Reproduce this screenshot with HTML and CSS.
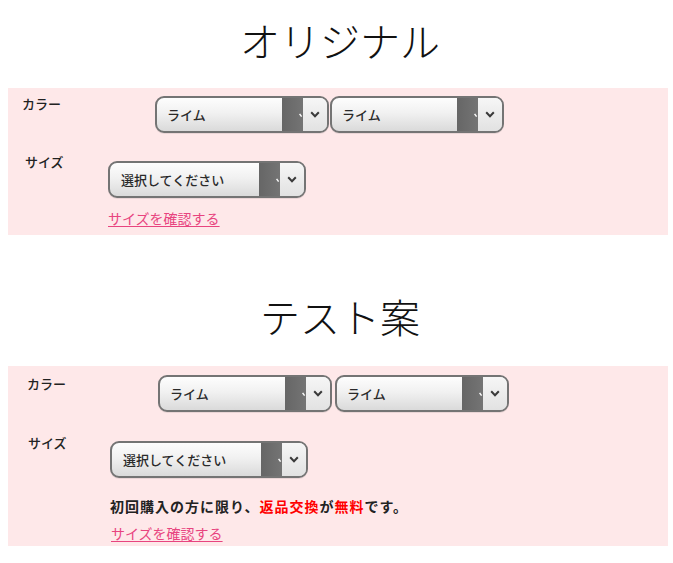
FILE: index.html
```html
<!DOCTYPE html>
<html lang="ja">
<head>
<meta charset="utf-8">
<title>オリジナル / テスト案</title>
<link rel="stylesheet" href="styles.css">
</head>
<body>
<main class="page">
  <section class="variant variant-original">
    <h2 class="title">オリジナル</h2>
    <div class="panel">
      <div class="row row-color">
        <span class="label">カラー</span>
        <div class="selects">
          <div class="select select-color">
            <span class="value">ライム</span>
            <span class="stripe"><svg class="tick" width="4" height="5" viewBox="0 0 4 5"><path d="M0.6 0.8 L2.6 3.6" stroke="#fff" stroke-width="1.4" fill="none"/></svg></span>
            <span class="arrow"><svg width="10" height="7" viewBox="0 0 10 7"><path d="M1.2 1.3 L5 5.2 L8.8 1.3" stroke="#3a3a3a" stroke-width="2" fill="none"/></svg></span>
          </div>
          <div class="select select-color">
            <span class="value">ライム</span>
            <span class="stripe"><svg class="tick" width="4" height="5" viewBox="0 0 4 5"><path d="M0.6 0.8 L2.6 3.6" stroke="#fff" stroke-width="1.4" fill="none"/></svg></span>
            <span class="arrow"><svg width="10" height="7" viewBox="0 0 10 7"><path d="M1.2 1.3 L5 5.2 L8.8 1.3" stroke="#3a3a3a" stroke-width="2" fill="none"/></svg></span>
          </div>
        </div>
      </div>
      <div class="row row-size">
        <span class="label">サイズ</span>
        <div class="select select-size">
          <span class="value">選択してください</span>
          <span class="stripe"><svg class="tick" width="4" height="5" viewBox="0 0 4 5"><path d="M0.6 0.8 L2.6 3.6" stroke="#fff" stroke-width="1.4" fill="none"/></svg></span>
          <span class="arrow"><svg width="10" height="7" viewBox="0 0 10 7"><path d="M1.2 1.3 L5 5.2 L8.8 1.3" stroke="#3a3a3a" stroke-width="2" fill="none"/></svg></span>
        </div>
      </div>
      <a class="size-link" href="#">サイズを確認する</a>
    </div>
  </section>

  <section class="variant variant-test">
    <h2 class="title">テスト案</h2>
    <div class="panel">
      <div class="row row-color">
        <span class="label">カラー</span>
        <div class="selects">
          <div class="select select-color">
            <span class="value">ライム</span>
            <span class="stripe"><svg class="tick" width="4" height="5" viewBox="0 0 4 5"><path d="M0.6 0.8 L2.6 3.6" stroke="#fff" stroke-width="1.4" fill="none"/></svg></span>
            <span class="arrow"><svg width="10" height="7" viewBox="0 0 10 7"><path d="M1.2 1.3 L5 5.2 L8.8 1.3" stroke="#3a3a3a" stroke-width="2" fill="none"/></svg></span>
          </div>
          <div class="select select-color">
            <span class="value">ライム</span>
            <span class="stripe"><svg class="tick" width="4" height="5" viewBox="0 0 4 5"><path d="M0.6 0.8 L2.6 3.6" stroke="#fff" stroke-width="1.4" fill="none"/></svg></span>
            <span class="arrow"><svg width="10" height="7" viewBox="0 0 10 7"><path d="M1.2 1.3 L5 5.2 L8.8 1.3" stroke="#3a3a3a" stroke-width="2" fill="none"/></svg></span>
          </div>
        </div>
      </div>
      <div class="row row-size">
        <span class="label">サイズ</span>
        <div class="select select-size">
          <span class="value">選択してください</span>
          <span class="stripe"><svg class="tick" width="4" height="5" viewBox="0 0 4 5"><path d="M0.6 0.8 L2.6 3.6" stroke="#fff" stroke-width="1.4" fill="none"/></svg></span>
          <span class="arrow"><svg width="10" height="7" viewBox="0 0 10 7"><path d="M1.2 1.3 L5 5.2 L8.8 1.3" stroke="#3a3a3a" stroke-width="2" fill="none"/></svg></span>
        </div>
      </div>
      <p class="note">初回購入の方に限り、<em class="red">返品交換</em>が<em class="red">無料</em>です。</p>
      <a class="size-link" href="#">サイズを確認する</a>
    </div>
  </section>
</main>
</body>
</html>
```

FILE: styles.css
```css
* { box-sizing: border-box; }

html, body {
  margin: 0;
  padding: 0;
  background: #ffffff;
}

body {
  font-family: "Noto Sans CJK JP", "Noto Sans", sans-serif;
  color: #333333;
}

.page {
  width: 673px;
  padding: 0 5px 0 8px;
}

.title {
  margin: 0;
  height: 88px;
  line-height: 80px;
  font-size: 40px;
  font-weight: 300;
  color: #111111;
  text-align: center;
  padding-left: 4px;
}

.variant-test .title {
  height: 131px;
  padding-top: 42px;
  line-height: 78px;
}

.panel {
  width: 660px;
  background: #fee8e9;
  display: flex;
  flex-direction: column;
  align-items: flex-start;
}

.variant-original .panel {
  height: 147px;
  padding: 7px 0 0 14px;
}

.variant-test .panel {
  height: 180px;
  padding: 9px 0 0 19px;
}

.row {
  display: flex;
  align-items: flex-start;
}

.label {
  font-size: 13px;
  line-height: 17px;
  color: #222222;
  font-weight: 500;
  flex: none;
}

.row-color .label { width: 133px; }
.variant-test .row-color .label { width: 131px; }

.row-color .selects {
  display: flex;
  gap: 1px;
}

.variant-original .row-color .selects { margin-top: 1px; }
.variant-test .row-color .selects { gap: 3px; }

.row-size { padding-left: 3px; }
.variant-original .row-size { margin-top: 20px; }
.variant-test .row-size { margin-top: 22px; padding-left: 1px; }

.row-size .label { width: 83px; }
.variant-test .row-size .label { width: 82px; }

.variant-original .row-size .select { margin-top: 8px; }
.variant-test .row-size .select { margin-top: 7px; }

/* custom select */
.select {
  display: flex;
  height: 37px;
  border: 2px solid #747474;
  border-radius: 9px;
  overflow: hidden;
  background: linear-gradient(#fdfdfd 0%, #f1f1f1 45%, #dadada 100%);
  box-shadow: 0 1px 0 rgba(0,0,0,0.08);
}

.select-color { width: 174px; }
.select-size { width: 198px; }

.value {
  flex: 1;
  font-size: 13px;
  line-height: 33px;
  color: #2a2a2a;
  font-weight: 500;
  padding-left: 10px;
  white-space: nowrap;
}

.select-size .value { padding-left: 11px; }

.stripe {
  flex: none;
  width: 21px;
  background: linear-gradient(90deg, #666666 0%, #747474 100%);
  display: flex;
  justify-content: flex-end;
  align-items: center;
  padding-top: 2px;
}

.tick { display: block; }

.arrow {
  flex: none;
  width: 24px;
  background: linear-gradient(#f6f6f6, #e2e2e2);
  display: flex;
  align-items: center;
  justify-content: center;
  padding-right: 1px;
}

.arrow svg { display: block; }

.size-link {
  font-size: 14px;
  line-height: 18px;
  color: #e8447f;
  text-decoration: underline;
  text-underline-offset: 2px;
}

.variant-original .size-link { margin-top: 11px; padding-left: 86px; }
.variant-test .size-link { margin-top: 9px; padding-left: 84px; }

.note {
  margin: 19px 0 0 0;
  padding-left: 83px;
  font-size: 14px;
  line-height: 18px;
  font-weight: 700;
  color: #222222;
  letter-spacing: 1px;
  white-space: nowrap;
}

.note .red {
  font-style: normal;
  color: #ff0000;
}
```
